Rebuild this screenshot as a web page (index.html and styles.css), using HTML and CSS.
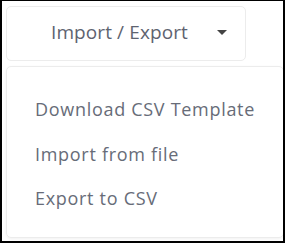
FILE: index.html
```html
<!DOCTYPE html>
<html lang="en">
<head>
  <meta charset="UTF-8">
  <meta name="viewport" content="width=device-width, initial-scale=1.0">
  <title>Import / Export</title>
  <link rel="stylesheet" href="styles.css">
</head>
<body>
  <div class="frame">
    <button class="toggle">
      <span class="label">Import / Export</span>
      <span class="caret"></span>
    </button>
    <ul class="menu">
      <li>Download CSV Template</li>
      <li>Import from file</li>
      <li>Export to CSV</li>
    </ul>
  </div>
</body>
</html>
```

FILE: styles.css
```css
html, body { margin: 0; padding: 0; background: #fff; }
body { font-family: "Open Sans", "DejaVu Sans", sans-serif; color: #676c78; }
.frame { box-sizing: border-box; width: 285px; height: 243px; border: 2px solid #000; border-top-width: 1px; padding: 5px 0 0 4px; overflow: hidden; }
.toggle { box-sizing: border-box; display: flex; align-items: center; width: 240px; height: 55px; padding: 0 18px 4px 44px; background: #fff; border: 1px solid #ececec; border-radius: 5px; font-family: inherit; font-size: 19px; letter-spacing: 0.1px; color: #5e6370; cursor: pointer; }
.label { flex: 1; text-align: left; }
.caret { width: 0; height: 0; margin-top: 2px; border-left: 5px solid transparent; border-right: 5px solid transparent; border-top: 5px solid #444; }
.menu { box-sizing: border-box; list-style: none; margin: 5px 0 0 0; padding: 20px 0 0 28px; width: 278px; height: 172px; border: 1px solid #ececec; border-radius: 5px; box-shadow: 0 1px 3px rgba(0,0,0,0.06); font-size: 18px; letter-spacing: 0.7px; }
.menu li { height: 44.5px; line-height: 44.5px; }
```
